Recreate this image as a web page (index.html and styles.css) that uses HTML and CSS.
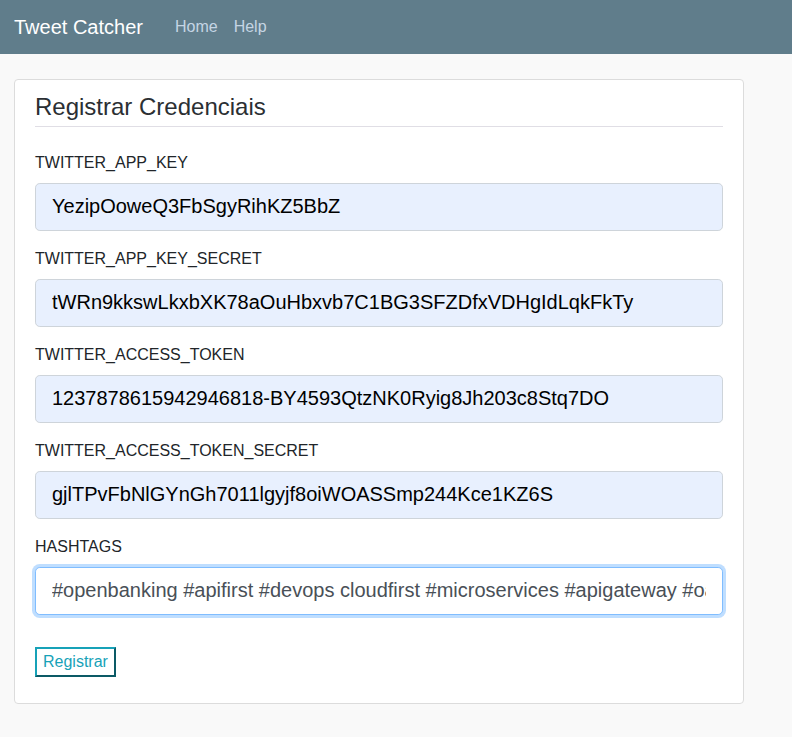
FILE: index.html
```html
<!DOCTYPE html>
<html lang="pt">
<head>
<meta charset="utf-8">
<title>Tweet Catcher</title>
<link rel="stylesheet" href="styles.css">
</head>
<body>
<nav class="navbar">
  <span class="brand">Tweet Catcher</span>
  <a class="nav-link" href="#">Home</a>
  <a class="nav-link" href="#">Help</a>
</nav>
<main class="page">
  <section class="card">
    <h4 class="card-title">Registrar Credenciais</h4>
    <hr class="divider">
    <form class="form">
      <div class="form-group">
        <label class="label">TWITTER_APP_KEY</label>
        <input class="input autofill" type="text" value="YezipOoweQ3FbSgyRihKZ5BbZ">
      </div>
      <div class="form-group">
        <label class="label">TWITTER_APP_KEY_SECRET</label>
        <input class="input autofill" type="text" value="tWRn9kkswLkxbXK78aOuHbxvb7C1BG3SFZDfxVDHgIdLqkFkTy">
      </div>
      <div class="form-group">
        <label class="label">TWITTER_ACCESS_TOKEN</label>
        <input class="input autofill" type="text" value="1237878615942946818-BY4593QtzNK0Ryig8Jh203c8Stq7DO">
      </div>
      <div class="form-group">
        <label class="label">TWITTER_ACCESS_TOKEN_SECRET</label>
        <input class="input autofill" type="text" value="gjlTPvFbNlGYnGh7011lgyjf8oiWOASSmp244Kce1KZ6S">
      </div>
      <div class="form-group">
        <label class="label">HASHTAGS</label>
        <input class="input focused" type="text" value="#openbanking #apifirst #devops cloudfirst #microservices #apigateway #oauth">
      </div>
      <button class="btn" type="button">Registrar</button>
    </form>
  </section>
</main>
</body>
</html>
```
FILE: styles.css
```css
* { box-sizing: border-box; }
html, body {
  margin: 0;
  padding: 0;
}
body {
  background: #f9f9f9;
  font-family: "Liberation Sans", Arial, sans-serif;
  font-size: 16px;
  line-height: 1.5;
  color: #212529;
  min-height: 737px;
}
.navbar {
  height: 54px;
  background: #607d8b;
  display: flex;
  align-items: center;
  padding: 0 14px;
}
.brand {
  color: #ffffff;
  font-size: 20px;
  line-height: 30px;
  margin-right: 32px;
  margin-top: -1px;
}
.nav-link {
  color: #c5d5e4;
  text-decoration: none;
  font-size: 16px;
  line-height: 24px;
  margin-right: 16px;
  margin-top: -1px;
}
.page {
  padding: 25px 0 0 14px;
}
.card {
  width: 730px;
  height: 625px;
  background: #ffffff;
  border: 1px solid #dcdcdc;
  border-radius: 4px;
  padding: 13px 20px 20px;
}
.card-title {
  margin: 0;
  font-size: 24px;
  font-weight: 400;
  line-height: 28.8px;
  color: #2b2f33;
}
.divider {
  margin: 4px 0 24px;
  border: 0;
  border-top: 1px solid #e0dee5;
}
.form-group {
  margin-bottom: 16px;
}
.label {
  display: block;
  margin-bottom: 8px;
  line-height: 24px;
  color: #212529;
}
.input {
  display: block;
  width: 100%;
  height: 48px;
  padding: 8px 16px;
  font-family: "Liberation Sans", Arial, sans-serif;
  font-size: 20px;
  line-height: 30px;
  border-radius: 4.8px;
  border: 1px solid #ced4da;
  outline: none;
}
.autofill {
  background: #e8f0fe;
  color: #000000;
}
.focused {
  background: #ffffff;
  color: #495057;
  border-color: #80bdff;
  box-shadow: 0 0 0 3px rgba(0, 123, 255, 0.25);
}
.form-group:last-of-type {
  margin-bottom: 32px;
}
.btn {
  display: block;
  height: 30px;
  padding: 0 6px;
  font-family: "Liberation Sans", Arial, sans-serif;
  font-size: 16px;
  line-height: 26px;
  color: #17a2b8;
  background: #ffffff;
  border: 2px solid;
  border-color: #17a2b8 #0c5a66 #0c5a66 #17a2b8;
  border-radius: 0;
}
```
